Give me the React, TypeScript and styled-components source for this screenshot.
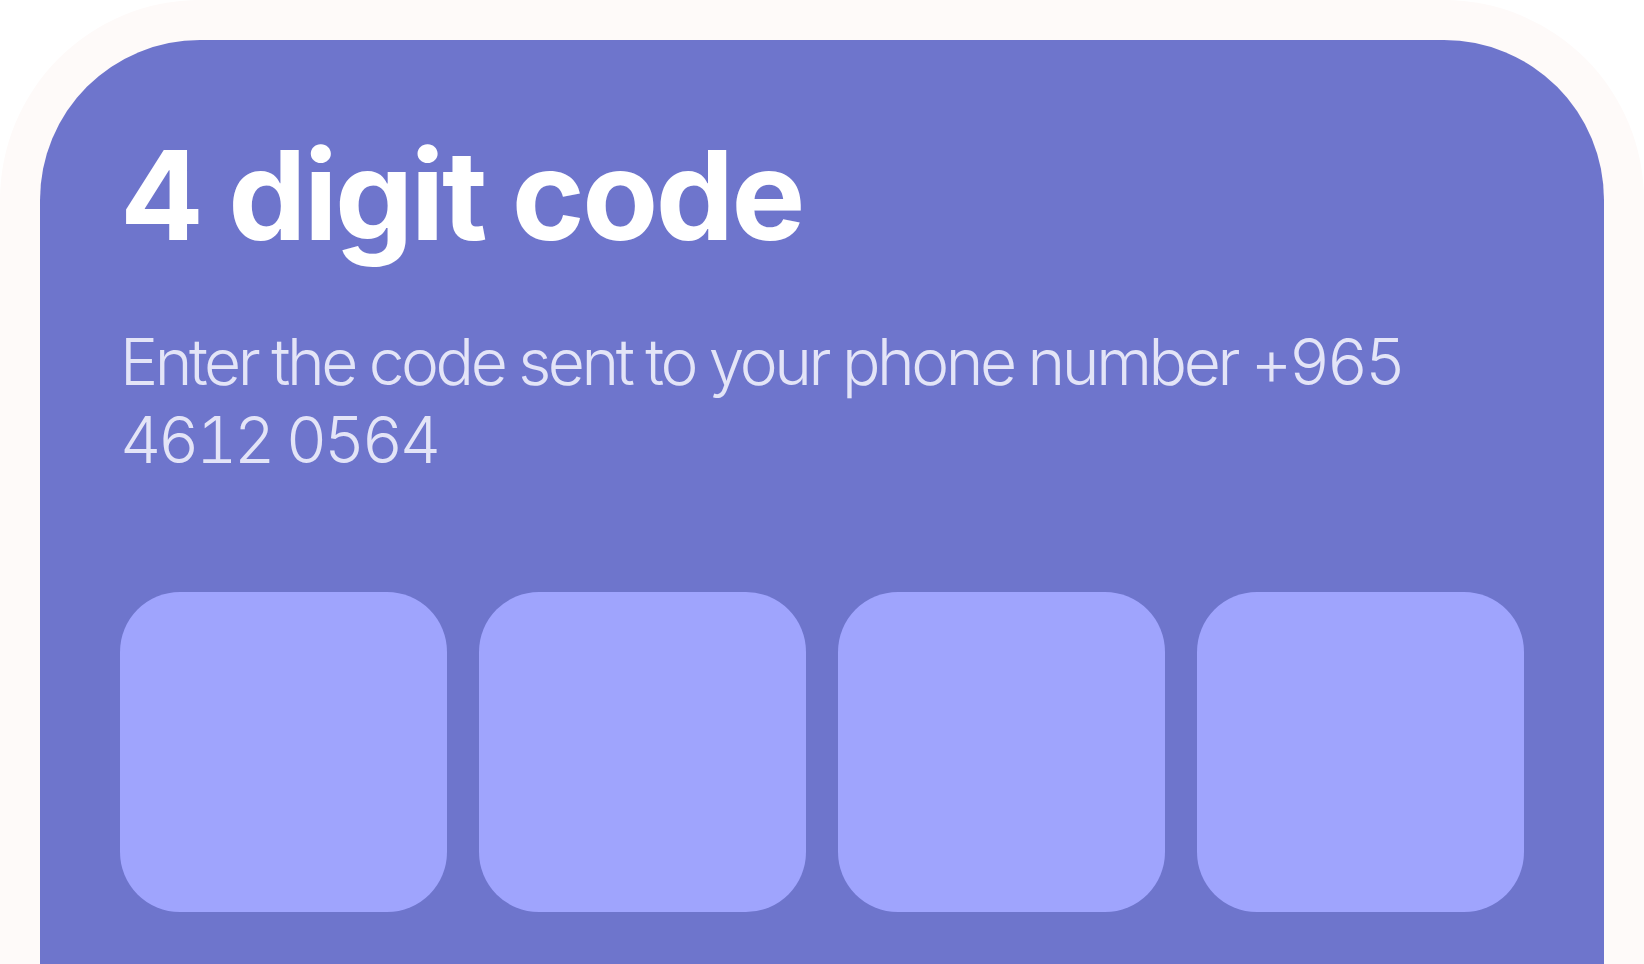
import React from "react";
import styled, { createGlobalStyle } from "styled-components";

const GlobalStyle = createGlobalStyle`
  html, body {
    margin: 0;
    padding: 0;
    background: #ffffff;
  }
  body {
    font-family: Inter, "Noto Sans", "Liberation Sans", sans-serif;
    overflow: hidden;
  }
`;

const Frame = styled.div`
  height: 100vh;
  box-sizing: border-box;
  padding: 40px 40px 0;
  background: #fefaf9;
  border-radius: 200px 200px 0 0;
  display: flex;
`;

const Card = styled.main`
  flex: 1;
  background: #6e75cc;
  border-radius: 160px 160px 0 0;
  padding: 80px 80px 0;
  display: flex;
  flex-direction: column;
`;

const Title = styled.h1`
  margin: 0;
  color: #ffffff;
  font-size: 124px;
  font-weight: 700;
  line-height: 150px;
  letter-spacing: -2.5px;
`;

const Subtitle = styled.p`
  margin: 53px 0 0;
  color: #e3e4f7;
  font-size: 64px;
  font-weight: 300;
  line-height: 78px;
  letter-spacing: -3.4px;
  font-variant-numeric: tabular-nums;
`;

const CodeRow = styled.div`
  margin-top: 113px;
  display: grid;
  grid-template-columns: repeat(4, 1fr);
  gap: 32px;
`;

const DigitBox = styled.input`
  height: 320px;
  width: 100%;
  box-sizing: border-box;
  border: none;
  border-radius: 60px;
  background: #9fa4fd;
  outline: none;
  padding: 0;
  text-align: center;
  font-family: inherit;
  font-size: 140px;
  font-weight: 700;
  color: #ffffff;
`;

export default function App() {
  const digits = [0, 1, 2, 3];
  return (
    <>
      <GlobalStyle />
      <Frame>
        <Card>
          <Title>4 digit code</Title>
          <Subtitle>
            Enter the code sent to your phone number +965 4612 0564
          </Subtitle>
          <CodeRow>
            {digits.map((d) => (
              <DigitBox key={d} maxLength={1} inputMode="numeric" aria-label={`Digit ${d + 1}`} />
            ))}
          </CodeRow>
        </Card>
      </Frame>
    </>
  );
}
